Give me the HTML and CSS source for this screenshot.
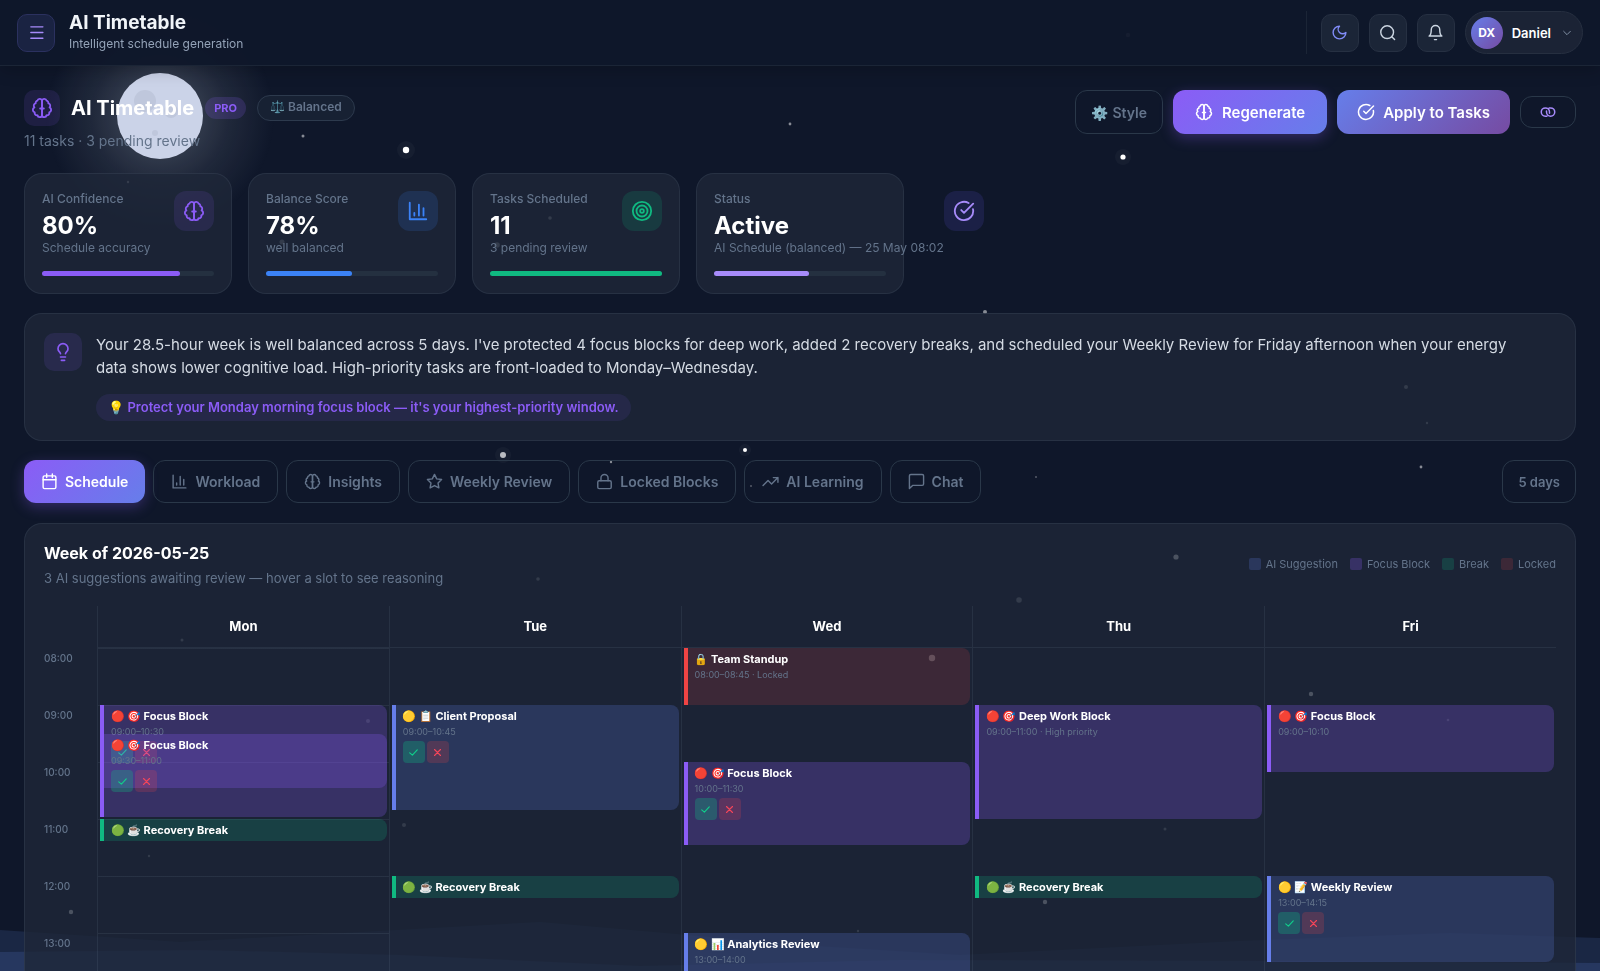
FILE: index.html
```html
<!DOCTYPE html>
<html lang="en">
<head>
    <meta charset="UTF-8">
    <meta name="viewport" content="width=device-width, initial-scale=1.0">
    <title>AI Timetable</title>
    <link rel="stylesheet" href="styles.css">
</head>
<body>
    <!-- Night sky -->
    <svg class="sky" viewBox="0 0 1600 971" preserveAspectRatio="xMidYMax slice" aria-hidden="true">
        <defs>
            <radialGradient id="moonGlow">
                <stop offset="0.3" stop-color="#cbd5e1" stop-opacity="0.2"/>
                <stop offset="0.6" stop-color="#cbd5e1" stop-opacity="0.09"/>
                <stop offset="1" stop-color="#cbd5e1" stop-opacity="0"/>
            </radialGradient>
        </defs>
        <circle cx="160" cy="116" r="115" fill="url(#moonGlow)"/>
        <circle cx="160" cy="116" r="43" fill="#cbd3e8"/>
        <g fill="#bfc7dc">
            <circle cx="145" cy="101" r="11"/>
            <circle cx="171" cy="111" r="7"/>
            <circle cx="155" cy="133" r="3"/>
        </g>
        <g fill="#fff">
            <g opacity="0.03">
                <circle cx="406" cy="150" r="9"/>
                <circle cx="1123" cy="157" r="8"/>
                <circle cx="503" cy="455" r="8"/>
                <circle cx="745" cy="450" r="6"/>
            </g>
            <circle cx="406" cy="150" r="3.2"/>
            <circle cx="1123" cy="157" r="2.6"/>
            <circle cx="745" cy="450" r="2"/>
            <circle cx="503" cy="455" r="3" opacity="0.7"/>
            <circle cx="932" cy="658" r="3.2"/>
            <circle cx="1176" cy="557" r="2.6"/>
            <circle cx="1311" cy="694" r="2.2"/>
            <circle cx="1045" cy="902" r="2.2"/>
            <circle cx="71" cy="912" r="2.2"/>
            <g opacity="0.5">
                <circle cx="303" cy="136" r="1.5"/>
                <circle cx="790" cy="124" r="1.4"/>
                <circle cx="985" cy="312" r="2"/>
                <circle cx="1421" cy="467" r="1.4"/>
                <circle cx="1036" cy="477" r="0.8"/>
                <circle cx="611" cy="462" r="1.2"/>
                <circle cx="751" cy="486" r="0.8"/>
                <circle cx="1019" cy="600" r="2.8"/>
                <circle cx="1406" cy="387" r="2"/>
                <circle cx="1427" cy="423" r="1.2"/>
                <circle cx="538" cy="579" r="1.8"/>
                <circle cx="182" cy="640" r="1.5"/>
                <circle cx="368" cy="721" r="2"/>
                <circle cx="404" cy="825" r="2"/>
                <circle cx="149" cy="856" r="1.2"/>
                <circle cx="1165" cy="829" r="1.5"/>
                <circle cx="1448" cy="720" r="1.3"/>
                <circle cx="858" cy="931" r="1.2"/>
                <circle cx="550" cy="218" r="1.8"/>
                <circle cx="282" cy="242" r="2.5"/>
                <circle cx="497" cy="245" r="2.8"/>
                <circle cx="128" cy="182" r="1.2"/>
                <circle cx="1128" cy="35" r="2.2"/>
            </g>
        </g>
        <path d="M0 930 L180 942 L540 922 L800 945 L960 955 L1240 941 L1450 933 L1600 938 V971 H0Z" fill="#1a2744"/>
        <path d="M0 952 L200 950 L400 955 L640 966 L900 960 L1300 961 L1600 963 V971 H0Z" fill="#26375f"/>
    </svg>

    <!-- Icons -->
    <svg class="sprite" aria-hidden="true">
        <symbol id="i-brain" viewBox="0 0 24 24">
            <path d="M9.5 2A2.5 2.5 0 0 1 12 4.5v15a2.5 2.5 0 0 1-4.96.44 2.5 2.5 0 0 1-2.96-3.08 3 3 0 0 1-.34-5.58 2.5 2.5 0 0 1 1.32-4.24 2.5 2.5 0 0 1 1.98-3A2.5 2.5 0 0 1 9.5 2Z"/>
            <path d="M14.5 2A2.5 2.5 0 0 0 12 4.5v15a2.5 2.5 0 0 0 4.96.44 2.5 2.5 0 0 0 2.96-3.08 3 3 0 0 0 .34-5.58 2.5 2.5 0 0 0-1.32-4.24 2.5 2.5 0 0 0-1.98-3A2.5 2.5 0 0 0 14.5 2Z"/>
            <path d="M10 12.5h4"/>
        </symbol>
        <symbol id="i-chart" viewBox="0 0 24 24"><path d="M3 3v18h18M8 17v-3M13 17V5M18 17V9"/></symbol>
        <symbol id="i-check-circle" viewBox="0 0 24 24"><path d="M21.8 10A10 10 0 1 1 17 3.34M9 11l3 3L22 4"/></symbol>
        <symbol id="i-check" viewBox="0 0 24 24"><path d="M22 5 9 19l-7-6"/></symbol>
        <symbol id="i-x" viewBox="0 0 24 24"><path d="M20 4 4 20M4 4l16 16"/></symbol>
    </svg>

    <header class="topbar">
        <button class="menu-btn" aria-label="Menu">
            <svg class="icon" viewBox="0 0 24 24"><path d="M4 4h17M4 12h17M4 20h17"/></svg>
        </button>
        <div class="topbar-title">
            <h2>AI Timetable</h2>
            <p>Intelligent schedule generation</p>
        </div>
        <div class="topbar-actions">
            <button class="tool-btn moon" aria-label="Dark mode">
                <svg class="icon" viewBox="0 0 24 24"><path d="M12 3a6 6 0 0 0 9 9 9 9 0 1 1-9-9Z"/></svg>
            </button>
            <button class="tool-btn" aria-label="Search">
                <svg class="icon" viewBox="0 0 24 24"><circle cx="11.5" cy="11.5" r="9"/><path d="m22 22-4-4"/></svg>
            </button>
            <button class="tool-btn" aria-label="Notifications">
                <svg class="icon" viewBox="0 0 24 24"><path d="M18 8A6 6 0 0 0 6 8c0 7-3 9-3 9h18s-3-2-3-9M10.5 22h3"/></svg>
            </button>
            <button class="user">
                <span class="avatar">DX</span>
                <span>Daniel</span>
                <svg class="icon chevron" viewBox="0 0 24 24"><path d="m4 8 8 8 8-8"/></svg>
            </button>
        </div>
    </header>

    <main>
        <section class="hero">
            <div>
                <div class="hero-title">
                    <span class="icon-box violet small"><svg class="icon"><use href="#i-brain"/></svg></span>
                    <h1>AI Timetable</h1>
                    <span class="pro">PRO</span>
                    <span class="mode"><span class="tint">⚖️</span> Balanced</span>
                </div>
                <p class="hero-sub">11 tasks · 3 pending review</p>
            </div>
            <div class="hero-actions">
                <button class="btn outline"><span class="tint">⚙️</span> Style</button>
                <button class="btn primary"><svg class="icon"><use href="#i-brain"/></svg>Regenerate</button>
                <button class="btn apply"><svg class="icon"><use href="#i-check-circle"/></svg>Apply to Tasks</button>
                <button class="btn outline loop" aria-label="Sync">
                    <svg class="icon" viewBox="0 0 24 24"><path d="M10.5 17.5H8.500a5.500 5.500 0 1 1 5.500-5.500v1.500M13.500 6.500h2a5.500 5.500 0 1 1-5.500 5.500v-1.500"/></svg>
                </button>
            </div>
        </section>

        <section class="stats">
            <div class="stat violet">
                <div class="stat-top">
                    <div><p>AI Confidence</p><strong>80%</strong><p>Schedule accuracy</p></div>
                    <span class="icon-box violet"><svg class="icon"><use href="#i-brain"/></svg></span>
                </div>
                <div class="bar"><div class="fill" style="width: 80%"></div></div>
            </div>
            <div class="stat blue">
                <div class="stat-top">
                    <div><p>Balance Score</p><strong>78%</strong><p>well balanced</p></div>
                    <span class="icon-box blue"><svg class="icon"><use href="#i-chart"/></svg></span>
                </div>
                <div class="bar"><div class="fill" style="width: 50%"></div></div>
            </div>
            <div class="stat green">
                <div class="stat-top">
                    <div><p>Tasks Scheduled</p><strong>11</strong><p>3 pending review</p></div>
                    <span class="icon-box green"><svg class="icon" viewBox="0 0 24 24"><circle cx="12" cy="12" r="10"/><circle cx="12" cy="12" r="6"/><circle cx="12" cy="12" r="2"/></svg></span>
                </div>
                <div class="bar"><div class="fill" style="width: 100%"></div></div>
            </div>
            <div class="stat lilac">
                <div class="stat-top">
                    <div><p>Status</p><strong>Active</strong><p>AI Schedule (balanced) — 25 May 08:02</p></div>
                    <span class="icon-box lilac"><svg class="icon"><use href="#i-check-circle"/></svg></span>
                </div>
                <div class="bar"><div class="fill" style="width: 55%"></div></div>
            </div>
        </section>

        <section class="insight">
            <span class="icon-box violet medium">
                <svg class="icon" viewBox="0 0 24 24"><path d="M15 14c.2-1 .7-1.700 1.500-2.500 1-.9 1.500-2.200 1.500-3.500A6 6 0 0 0 6 8c0 1 .2 2.200 1.500 3.500.7.7 1.300 1.500 1.500 2.500M9 18h6M10 22h4"/></svg>
            </span>
            <div>
                <p>Your 28.5-hour week is well balanced across 5 days. I've protected 4 focus blocks for deep work, added 2 recovery breaks, and scheduled your Weekly Review for Friday afternoon when your energy data shows lower cognitive load. High-priority tasks are front-loaded to Monday–Wednesday.</p>
                <span class="tip">💡 Protect your Monday morning focus block — it's your highest-priority window.</span>
            </div>
        </section>

        <nav class="tabs">
            <button class="tab active"><svg class="icon" viewBox="0 0 24 24"><rect x="3" y="4" width="18" height="18" rx="2"/><path d="M8 1.500v5M16 1.500v5M3 9.500h18"/></svg>Schedule</button>
            <button class="tab"><svg class="icon"><use href="#i-chart"/></svg>Workload</button>
            <button class="tab"><svg class="icon"><use href="#i-brain"/></svg>Insights</button>
            <button class="tab"><svg class="icon" viewBox="0 0 24 24"><path d="m12 2 3.090 6.260L22 9.270l-5 4.870 1.180 6.880L12 17.770l-6.180 3.250L7 14.140 2 9.270l6.910-1.010Z"/></svg>Weekly Review</button>
            <button class="tab"><svg class="icon" viewBox="0 0 24 24"><rect x="2.500" y="11" width="19" height="11" rx="2"/><path d="M7 11V7a5 5 0 0 1 10 0v4"/></svg>Locked Blocks</button>
            <button class="tab"><svg class="icon" viewBox="0 0 24 24"><path d="m1.500 17.500 7-7 5 5 9-9M16 6.500h6.500V13"/></svg>AI Learning</button>
            <button class="tab"><svg class="icon" viewBox="0 0 24 24"><path d="M22 15.500a2 2 0 0 1-2 2H6.500L2 22V4a2 2 0 0 1 2-2h16a2 2 0 0 1 2 2Z"/></svg>Chat</button>
            <button class="tab days">5 days</button>
        </nav>

        <section class="schedule">
            <div class="schedule-head">
                <div>
                    <h3>Week of 2026-05-25</h3>
                    <p>3 AI suggestions awaiting review — hover a slot to see reasoning</p>
                </div>
                <ul class="legend">
                    <li class="ai">AI Suggestion</li>
                    <li class="focus">Focus Block</li>
                    <li class="break">Break</li>
                    <li class="locked">Locked</li>
                </ul>
            </div>

            <div class="week">
                <div class="hours">
                    <span>08:00</span><span>09:00</span><span>10:00</span><span>11:00</span><span>12:00</span><span>13:00</span>
                </div>
                <div class="day">
                    <h4>Mon</h4>
                    <div class="slots lined">
                        <div class="event focus" style="--hour: 2; height: 112px">
                            <b>🔴 🎯 Focus Block</b>
                            <small>09:00–10:30</small>
                            <div class="review"><button class="yes" aria-label="Accept"><svg class="icon"><use href="#i-check"/></svg></button><button class="no" aria-label="Reject"><svg class="icon"><use href="#i-x"/></svg></button></div>
                        </div>
                        <div class="event focus half" style="--hour: 2; height: 54px">
                            <b>🔴 🎯 Focus Block</b>
                            <small>09:30–11:00</small>
                            <div class="review"><button class="yes" aria-label="Accept"><svg class="icon"><use href="#i-check"/></svg></button><button class="no" aria-label="Reject"><svg class="icon"><use href="#i-x"/></svg></button></div>
                        </div>
                        <div class="event break" style="--hour: 4; height: 22px"><b>🟢 ☕ Recovery Break</b></div>
                    </div>
                </div>
                <div class="day">
                    <h4>Tue</h4>
                    <div class="slots">
                        <div class="event ai" style="--hour: 2; height: 105px">
                            <b>🟡 📋 Client Proposal</b>
                            <small>09:00–10:45</small>
                            <div class="review"><button class="yes" aria-label="Accept"><svg class="icon"><use href="#i-check"/></svg></button><button class="no" aria-label="Reject"><svg class="icon"><use href="#i-x"/></svg></button></div>
                        </div>
                        <div class="event break" style="--hour: 5; height: 22px"><b>🟢 ☕ Recovery Break</b></div>
                    </div>
                </div>
                <div class="day">
                    <h4>Wed</h4>
                    <div class="slots">
                        <div class="event locked" style="--hour: 1; height: 57px">
                            <b>🔒 Team Standup</b>
                            <small>08:00–08:45 · Locked</small>
                        </div>
                        <div class="event focus" style="--hour: 3; height: 83px">
                            <b>🔴 🎯 Focus Block</b>
                            <small>10:00–11:30</small>
                            <div class="review"><button class="yes" aria-label="Accept"><svg class="icon"><use href="#i-check"/></svg></button><button class="no" aria-label="Reject"><svg class="icon"><use href="#i-x"/></svg></button></div>
                        </div>
                        <div class="event ai" style="--hour: 6; height: 57px">
                            <b>🟡 📊 Analytics Review</b>
                            <small>13:00–14:00</small>
                        </div>
                    </div>
                </div>
                <div class="day">
                    <h4>Thu</h4>
                    <div class="slots">
                        <div class="event focus" style="--hour: 2; height: 114px">
                            <b>🔴 🎯 Deep Work Block</b>
                            <small>09:00–11:00 · High priority</small>
                        </div>
                        <div class="event break" style="--hour: 5; height: 22px"><b>🟢 ☕ Recovery Break</b></div>
                    </div>
                </div>
                <div class="day">
                    <h4>Fri</h4>
                    <div class="slots">
                        <div class="event focus" style="--hour: 2; height: 67px">
                            <b>🔴 🎯 Focus Block</b>
                            <small>09:00–10:10</small>
                        </div>
                        <div class="event ai" style="--hour: 5; height: 86px">
                            <b>🟡 📝 Weekly Review</b>
                            <small>13:00–14:15</small>
                            <div class="review"><button class="yes" aria-label="Accept"><svg class="icon"><use href="#i-check"/></svg></button><button class="no" aria-label="Reject"><svg class="icon"><use href="#i-x"/></svg></button></div>
                        </div>
                    </div>
                </div>
            </div>
        </section>
    </main>
</body>
</html>
```

FILE: styles.css
```css
* {
    margin: 0;
    padding: 0;
    box-sizing: border-box;
}

:root {
    --bg: #0f172a;
    --card: rgba(30, 39, 56, 0.8);
    --line: rgba(148, 163, 184, 0.11);
    --outline: #2a3849;
    --muted: #64748b;
    --violet: #8b5cf6;
    --blue: #3b82f6;
    --indigo: #667eea;
    --green: #10b981;
    --lilac: #a78bfa;
}

html {
    background-color: var(--bg);
    scrollbar-width: none;
}

body {
    font-family: Inter, "Noto Color Emoji", sans-serif;
    font-size: 14px;
    color: #fff;
    min-height: 100vh;
}

button {
    font-family: inherit;
    color: inherit;
    background: none;
    border: none;
    cursor: pointer;
}

.sky {
    position: fixed;
    inset: 0;
    width: 100%;
    height: 100%;
    z-index: -1;
}

.sprite {
    display: none;
}

.icon {
    width: 20px;
    height: 20px;
    flex-shrink: 0;
    fill: none;
    stroke: currentColor;
    stroke-width: 2;
    stroke-linecap: round;
    stroke-linejoin: round;
}

/* Top bar */
.topbar {
    position: sticky;
    top: 0;
    z-index: 10;
    display: flex;
    align-items: center;
    gap: 14px;
    height: 66px;
    padding: 0 17px;
    background-color: rgba(15, 23, 42, 0.95);
    border-bottom: 1px solid #1b2536;
    box-shadow: 0 4px 16px rgba(0, 0, 0, 0.2);
}

.menu-btn,
.tool-btn {
    display: flex;
    align-items: center;
    justify-content: center;
    width: 38px;
    height: 38px;
    border-radius: 10px;
    border: 1px solid #263042;
    background-color: #1b2537;
    color: #cbd5e1;
}

.menu-btn {
    color: var(--lilac);
    background-color: #1a2342;
    border-color: #2b315f;
}

.menu-btn .icon,
.tool-btn .icon {
    width: 17px;
    height: 17px;
}

.tool-btn.moon {
    color: #818cf8;
}

.topbar-title h2 {
    font-size: 19px;
    line-height: 22px;
    font-weight: 700;
    color: #f1f5f9;
}

.topbar-title p {
    font-size: 12px;
    line-height: 20px;
    color: #94a3b8;
}

.topbar-actions {
    display: flex;
    align-items: center;
    gap: 10px;
    margin-left: auto;
    padding-left: 14px;
    border-left: 1px solid #1b2536;
}

.user {
    display: flex;
    align-items: center;
    gap: 9px;
    height: 43px;
    padding: 0 10px 0 5px;
    border: 1px solid #262f40;
    border-radius: 22px;
    background-color: #1b2335;
    font-size: 13px;
    font-weight: 600;
}

.avatar {
    display: flex;
    align-items: center;
    justify-content: center;
    width: 32px;
    height: 32px;
    border-radius: 50%;
    background: linear-gradient(135deg, #667eea, #764ba2);
    font-size: 12px;
    font-weight: 700;
}

.user .chevron {
    width: 10px;
    height: 10px;
    margin-left: 2px;
    color: #94a3b8;
}

main {
    padding: 24px;
}

/* Hero */
.hero {
    display: flex;
    justify-content: space-between;
    align-items: flex-start;
}

.hero-title {
    display: flex;
    align-items: center;
    gap: 11px;
}

.hero-title h1 {
    font-size: 20px;
    line-height: 24px;
    font-weight: 700;
}

.hero-sub {
    margin-top: 5px;
    font-size: 14px;
    line-height: 20px;
    color: var(--muted);
}

.pro {
    padding: 0 9px;
    border-radius: 11px;
    background-color: rgba(139, 92, 246, 0.18);
    color: var(--violet);
    font-size: 11px;
    line-height: 22px;
    font-weight: 700;
}

.mode {
    padding: 0 12px;
    border: 1px solid #2d3a4d;
    border-radius: 13px;
    background-color: #172133;
    color: var(--muted);
    font-size: 12px;
    line-height: 22px;
    height: 26px;
    font-weight: 600;
}

.tint {
    color: #7fb4c4;
}

.hero-actions {
    display: flex;
    align-items: center;
    gap: 10px;
}

.btn {
    display: flex;
    align-items: center;
    gap: 9px;
    height: 44px;
    padding: 0 22px;
    border-radius: 12px;
    font-size: 15px;
    font-weight: 600;
}

.btn .icon {
    width: 18px;
    height: 18px;
}

.btn.outline {
    gap: 4px;
    padding: 0 15px;
    border: 1px solid var(--outline);
    color: var(--muted);
    font-size: 14px;
}

.btn.primary {
    background: linear-gradient(135deg, var(--violet), var(--indigo));
    box-shadow: 0 4px 14px rgba(139, 92, 246, 0.3);
}

.btn.apply {
    gap: 8px;
    padding: 0 20px;
    background: linear-gradient(135deg, #667eea, #764ba2);
}

.btn.loop {
    height: 32px;
    padding: 0 18px;
    color: var(--lilac);
}

/* Icon tiles */
.icon-box {
    display: flex;
    align-items: center;
    justify-content: center;
    flex-shrink: 0;
    width: 40px;
    height: 40px;
    border-radius: 12px;
}

.icon-box .icon {
    width: 22px;
    height: 22px;
}

.icon-box.small {
    width: 36px;
    height: 36px;
    border-radius: 10px;
}

.icon-box.medium {
    width: 38px;
    height: 38px;
    border-radius: 10px;
}

.icon-box.medium .icon {
    width: 20px;
    height: 20px;
}

.icon-box.violet {
    color: var(--violet);
    background-color: rgba(139, 92, 246, 0.12);
}

.icon-box.blue {
    color: var(--blue);
    background-color: rgba(59, 130, 246, 0.15);
}

.icon-box.green {
    color: var(--green);
    background-color: rgba(16, 185, 129, 0.15);
}

.icon-box.lilac {
    color: var(--lilac);
    background-color: rgba(102, 90, 234, 0.15);
}

/* Stats */
.stats {
    display: grid;
    grid-template-columns: repeat(auto-fill, minmax(200px, 1fr));
    gap: 16px;
    margin-top: 22px;
}

.stat {
    padding: 17px;
    border: 1px solid var(--line);
    border-radius: 18px;
    background-color: var(--card);
}

.stat-top {
    display: flex;
    justify-content: space-between;
    align-items: flex-start;
    white-space: nowrap;
}

.stat p {
    font-size: 12px;
    line-height: 16px;
    font-weight: 500;
    color: var(--muted);
}

.stat p:last-child {
    font-weight: 400;
}

.stat strong {
    display: block;
    padding-top: 4px;
    font-size: 24px;
    line-height: 29px;
    font-weight: 700;
}

.bar {
    height: 5px;
    margin-top: 15px;
    border-radius: 3px;
    background-color: #243040;
}

.fill {
    height: 5px;
    border-radius: 3px;
    background-color: var(--violet);
}

.blue .fill {
    background-color: var(--blue);
}

.green .fill {
    background-color: var(--green);
}

.lilac .fill {
    background-color: var(--lilac);
}

/* Insight */
.insight {
    display: flex;
    gap: 14px;
    margin-top: 19px;
    padding: 19px;
    border: 1px solid var(--line);
    border-radius: 18px;
    background-color: var(--card);
}

.insight p {
    padding-right: 20px;
    font-size: 15px;
    line-height: 23px;
    color: #d5dbe4;
}

.tip {
    display: inline-block;
    margin-top: 15px;
    padding: 0 12px;
    border-radius: 14px;
    background-color: rgba(139, 92, 246, 0.1);
    color: var(--violet);
    font-size: 13px;
    line-height: 27px;
    font-weight: 600;
}

/* Tabs */
.tabs {
    display: flex;
    gap: 8px;
    margin-top: 19px;
}

.tab {
    display: flex;
    align-items: center;
    gap: 7px;
    height: 43px;
    padding: 0 17px;
    border: 1px solid var(--outline);
    border-radius: 12px;
    color: var(--muted);
    font-size: 14px;
    font-weight: 600;
    white-space: nowrap;
}

.tab .icon {
    width: 17px;
    height: 17px;
}

.tab.active {
    padding: 0 16px;
    border-color: transparent;
    background: linear-gradient(135deg, var(--violet), var(--indigo)) border-box;
    color: #fff;
    box-shadow: 0 4px 14px rgba(139, 92, 246, 0.3);
}

.tab.days {
    margin-left: auto;
    padding: 0 15px;
    font-size: 13px;
}

/* Schedule */
.schedule {
    margin-top: 20px;
    padding: 19px;
    border: 1px solid var(--line);
    border-radius: 18px;
    background-color: var(--card);
}

.schedule-head {
    display: flex;
    justify-content: space-between;
    align-items: center;
}

.schedule-head h3 {
    font-size: 16px;
    line-height: 20px;
    font-weight: 700;
}

.schedule-head p {
    margin-top: 5px;
    font-size: 13px;
    line-height: 20px;
    color: var(--muted);
}

.legend {
    display: flex;
    gap: 12px;
    padding-bottom: 3px;
    list-style: none;
    font-size: 11px;
    color: #64748b;
}

.legend li {
    display: flex;
    align-items: center;
    gap: 5px;
}

.legend li::before {
    content: "";
    width: 12px;
    height: 12px;
    border-radius: 2px;
    background-color: var(--slot);
}

.ai {
    --slot: rgba(102, 126, 234, 0.22);
    --edge: #667eea;
}

.focus {
    --slot: rgba(139, 92, 246, 0.25);
    --edge: #8b5cf6;
}

.break {
    --slot: rgba(16, 185, 129, 0.2);
    --edge: #10b981;
}

.locked {
    --slot: rgba(239, 68, 68, 0.16);
    --edge: #ef4444;
}

.week {
    display: grid;
    grid-template-columns: 53px repeat(5, 1fr);
    margin-top: 18px;
}

.hours {
    padding-top: 43px;
    font-size: 10px;
    font-weight: 500;
    color: var(--muted);
}

.hours span {
    display: block;
    height: 57px;
    line-height: 18px;
}

.day {
    border-left: 1px solid var(--line);
}

.day h4 {
    height: 42px;
    border-bottom: 1px solid var(--line);
    font-size: 13px;
    line-height: 40px;
    font-weight: 700;
    text-align: center;
}

.slots {
    display: grid;
    grid-template-columns: 1fr;
    grid-template-rows: repeat(6, 57px);
    padding: 0 2px;
}

/* hour lines */
.slots.lined {
    background: repeating-linear-gradient(var(--line) 0 1px, transparent 1px 57px);
}

.event {
    grid-column: 1;
    grid-row: var(--hour);
    padding: 3px 7px;
    border-left: 4px solid var(--edge);
    border-radius: 0 8px 8px 0;
    background-color: var(--slot);
    background-clip: padding-box;
}

.event.half {
    margin-top: 29px;
}

.event b {
    display: block;
    font-size: 11px;
    line-height: 16px;
    font-weight: 700;
    white-space: nowrap;
}

.event small {
    display: block;
    font-size: 9px;
    line-height: 16px;
    color: #64748b;
}

.review {
    display: flex;
    gap: 2px;
    margin-top: 1px;
}

.review button {
    display: flex;
    align-items: center;
    justify-content: center;
    width: 22px;
    height: 22px;
    border-radius: 4px;
}

.review .icon {
    width: 9px;
    height: 9px;
    stroke-width: 3;
}

.review .yes {
    background-color: rgba(16, 185, 129, 0.3);
    color: #10d08b;
}

.review .no {
    background-color: rgba(239, 68, 68, 0.2);
    color: #f4465a;
}
```
